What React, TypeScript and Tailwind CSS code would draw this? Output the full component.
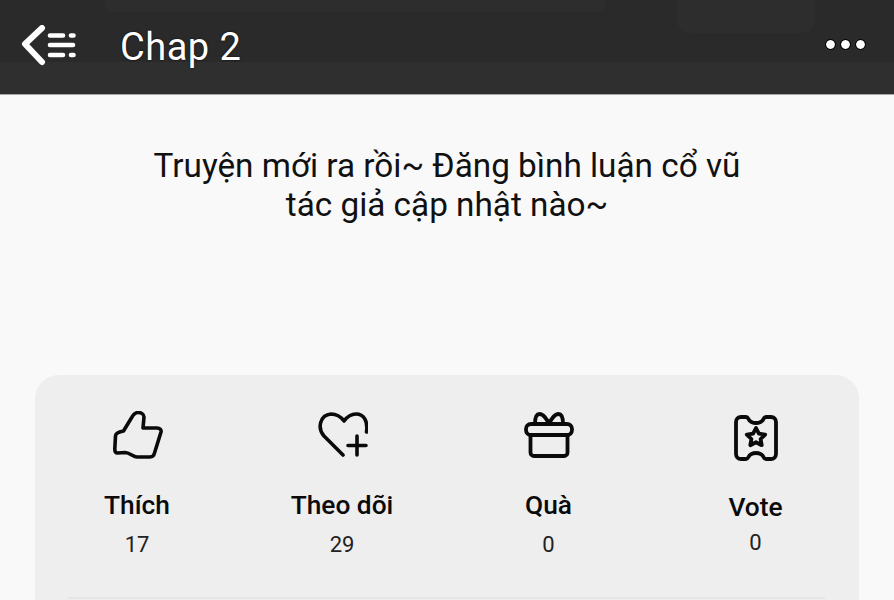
import React from "react";

const font = { fontFamily: "Roboto, sans-serif" };

function Thumb() {
  return (
    <svg width="50" height="48" viewBox="0 0 50 48" fill="none" stroke="#0a0a0a" strokeWidth="3.6" strokeLinejoin="round" strokeLinecap="round" className="translate-x-[1px]">
      <path d="M2.500 25C2.500 22.500 5 21 10.500 20L19 6C21 2.500 23 1.500 25 1.500C28 1.500 31 3 31 6L30 17L44 17C47 17 48.500 19 48 21L41.500 42C41 44.500 39 46 37 46L24 46C20 46 17 41.500 12 41.500L4.500 42C2.500 42 1.800 40 1.800 38Z" />
    </svg>
  );
}

function HeartPlus() {
  return (
    <svg width="50" height="46" viewBox="0 0 50 46" fill="none" stroke="#0a0a0a" strokeWidth="3.6" strokeLinecap="round" strokeLinejoin="round" className="translate-x-[1px]">
      <path d="M25 43 L6 24 C-1 16 2 3 13 2 C19 2 23 5 26 9 C29 5 33 2 38 2 C46 2 50 9 48.500 20" />
      <path d="M39 24v19M30 33.500h18" />
    </svg>
  );
}

function Gift() {
  return (
    <svg width="50" height="47" viewBox="0 0 50 47" fill="none" stroke="#0a0a0a" strokeWidth="3.8" strokeLinecap="round" strokeLinejoin="round">
      <rect x="2" y="12" width="46" height="11" rx="5" />
      <path d="M6.500 23v17.500c0 2 1.500 3.500 3.500 3.500h30c2 0 3.500-1.500 3.500-3.500V23" />
      <path d="M11 12C11 6 12 2 15.500 2C19 2 23 7 25 12C27 7 31 2 34.500 2C38 2 39 6 39 12" />
    </svg>
  );
}

function Ticket() {
  return (
    <svg width="44" height="46" viewBox="0 0 44 46" fill="none" stroke="#0a0a0a" strokeWidth="3.8" strokeLinecap="round" strokeLinejoin="round">
      <path d="M7 2h5c1.500 0 2 1 2.500 2 1 2.500 4.500 4 7.500 4s6.500-1.500 7.500-4c.5-1 1-2 2.500-2h5c2.800 0 5 2.200 5 5v32c0 2.800-2.200 5-5 5h-5c-1.500 0-2-1-2.500-2-1-2.500-4.500-4-7.500-4s-6.500 1.500-7.500 4c-.5 1-1 2-2.500 2H7c-2.800 0-5-2.200-5-5V7c0-2.800 2.200-5 5-5z" />
      <path d="M22 13l2.900 5.700 6.300.9-4.600 4.400 1.100 6.200-5.700-3-5.700 3 1.100-6.200-4.600-4.400 6.300-.9z" />
    </svg>
  );
}

function BackMenu() {
  return (
    <svg width="56" height="42" viewBox="0 0 56 42" fill="none" stroke="#fff" strokeWidth="4.6" strokeLinecap="round" strokeLinejoin="round">
      <path d="M21 3 L4 19 L21 37" strokeWidth="6" />
      <path d="M29 10.500h13M50 10.500h2.500M29 20h23M29 30h13M50 30h2.500" />
    </svg>
  );
}

const items = [
  { label: "Thích", value: "17", icon: <Thumb />, iconBox: "h-[48px] mt-[36px]", labelBox: "mt-[31px]", valueBox: "mt-[12px]" },
  { label: "Theo dõi", value: "29", icon: <HeartPlus />, iconBox: "h-[48px] mt-[36px]", labelBox: "mt-[31px]", valueBox: "mt-[12px]" },
  { label: "Quà", value: "0", icon: <Gift />, iconBox: "h-[48px] mt-[36px]", labelBox: "mt-[31px]", valueBox: "mt-[12px]" },
  { label: "Vote", value: "0", icon: <Ticket />, iconBox: "h-[48px] mt-[39px]", labelBox: "mt-[30px]", valueBox: "mt-[8px]" },
];

export default function App() {
  return (
    <div className="w-[894px] h-[600px] overflow-hidden bg-[#f9f9f9]" style={font}>
      <header className="relative h-[95px] bg-[#2f2f2f] border-b border-[#a8a8a8] flex items-start overflow-hidden">
        <div className="absolute inset-x-0 top-0 h-[62px] bg-[#2b2a2a]" />
        <div className="absolute left-[105px] top-0 w-[500px] h-[12px] bg-[#2d2d2d] rounded-b-md" />
        <div className="absolute left-[677px] top-0 w-[138px] h-[33px] bg-[#2d2d2d] rounded-b-xl" />
        <div className="relative flex items-center w-full h-[94px] pb-[2px]">
          <div className="ml-[21px] w-[56px]"><BackMenu /></div>
          <span className="ml-[43px] mt-[1px] text-[38px] leading-[42px] tracking-[0.5px] text-white [text-shadow:0_0_2px_#000]">Chap 2</span>
          <div className="ml-auto mr-[29px] flex gap-[6px] mb-[3px]">
            <span className="w-[9px] h-[9px] rounded-full bg-white outline outline-1 outline-black" />
            <span className="w-[9px] h-[9px] rounded-full bg-white outline outline-1 outline-black" />
            <span className="w-[9px] h-[9px] rounded-full bg-white outline outline-1 outline-black" />
          </div>
        </div>
      </header>
      <div className="pt-[51px] h-[280px] text-center text-[33.3px] leading-[39px] text-[#111]">
        <p>Truyện mới ra rồi~ Đăng bình luận cổ vũ</p>
        <p>tác giả cập nhật nào~</p>
      </div>
      <section className="mx-[35px] h-[300px] bg-[#eeeeee] rounded-t-[24px]">
        <div className="grid grid-cols-[204px_206px_207px_207px] h-[222px]">
          {items.map((it) => (
            <div key={it.label} className="flex flex-col items-center">
              <div className={`${it.iconBox} flex items-center justify-center`}>{it.icon}</div>
              <div className={`${it.labelBox} text-[26.3px] leading-[30px] font-medium text-[#0a0a0a]`}>{it.label}</div>
              <div className={`${it.valueBox} text-[22px] leading-[26px] text-[#222]`}>{it.value}</div>
            </div>
          ))}
        </div>
        <div className="ml-[33px] w-[757px] h-[2px] bg-[#e4e4e4]" />
      </section>
    </div>
  );
}
